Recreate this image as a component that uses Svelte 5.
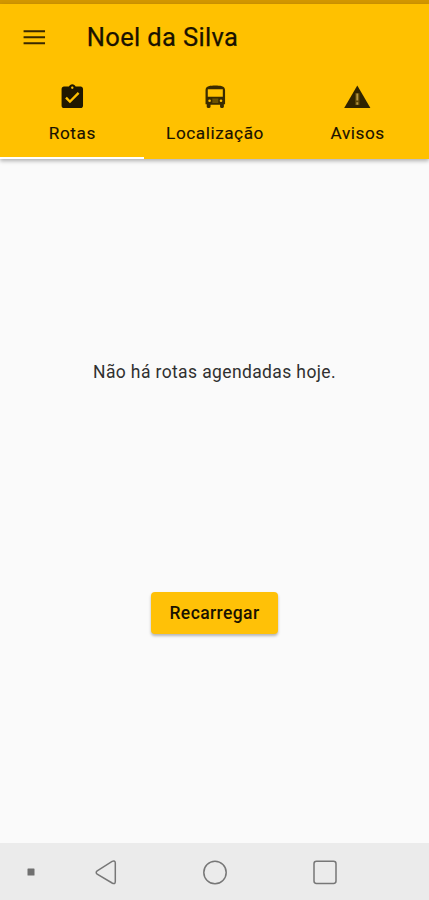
<script>
  const icons = {
    menu: 'M3 17.8h18v-1.7H3v1.7zm0-5h18v-1.7H3v1.7zm0-6.7v1.7h18V6.1H3z',
    tasks: 'M19 3h-4.18C14.4 1.84 13.3 1 12 1s-2.4.84-2.82 2H5c-1.1 0-2 .9-2 2v14c0 1.1.9 2 2 2h14c1.1 0 2-.9 2-2V5c0-1.1-.9-2-2-2zm-7 0c.55 0 1 .45 1 1s-.45 1-1 1-1-.45-1-1 .45-1 1-1zm-2 14l-4-4 1.41-1.41L10 14.17l6.59-6.59L18 9l-8 8z',
    warning: 'M1 21h22L12 2 1 21z'
  };
  const tabs = [
    { id: 'tasks', label: 'Rotas' },
    { id: 'bus', label: 'Localização' },
    { id: 'warning', label: 'Avisos' }
  ];
  let active = $state('tasks');
</script>

<div class="screen">
  <div class="status"></div>
  <header>
    <div class="toolbar">
      <button class="menu" aria-label="Menu">
        <svg class="icon" viewBox="0 0 24 24"><path d={icons.menu} /></svg>
      </button>
      <h1>Noel da Silva</h1>
    </div>
    <nav class="tabs">
      {#each tabs as tab}
        <button class="tab" class:active={active === tab.id} onclick={() => (active = tab.id)}>
          {#if tab.id === 'bus'}
            <svg class="icon bus" viewBox="0 0 24 24">
              <path fill-rule="evenodd" d="M12 2.2C8 2.2 3.8 2.6 3.8 6v11.9H4.8V20c0 .55.45 1 1 1h1.2c.55 0 1-.45 1-1v-1.8h8V20c0 .55.45 1 1 1h1.2c.55 0 1-.45 1-1v-2.1h1V6c0-3.4-4.2-3.8-8.2-3.8zM5.7 5.2h12.6v6.4H5.7zM7.2 13.8a1.1 1.1 0 1 1 0 2.2 1.1 1.1 0 0 1 0-2.2zM16.8 13.8a1.1 1.1 0 1 1 0 2.2 1.1 1.1 0 0 1 0-2.2z" />
              <path class="grille" d="M9.5 13h5v3.8h-5z" />
            </svg>
          {:else}
            <svg class="icon {tab.id}" viewBox="0 0 24 24">
              <path d={icons[tab.id]} />
              {#if tab.id === 'warning'}
                <path class="glow" d="M10.1 8.5h3.8v10h-3.8z" />
                <path class="mark" d="M11.2 8.8h1.6v5.9h-1.6zM11.2 16.2h1.6v2h-1.6z" />
              {/if}
            </svg>
          {/if}
          <span>{tab.label}</span>
        </button>
      {/each}
    </nav>
  </header>

  <main>
    <p>Não há rotas agendadas hoje.</p>
    <button class="reload">Recarregar</button>
  </main>

  <footer>
    <svg viewBox="0 0 429 57">
      <rect class="dot" x="27.5" y="25.5" width="7" height="7" rx="0.6" />
      <path d="M97.2 27.9 112.1 18.4Q115.3 17.3 115.3 20V38.5Q115.3 41.7 112.1 40L97.2 31.1Q95.2 29.5 97.2 27.9z" />
      <circle cx="215" cy="29.5" r="11.2" />
      <rect x="314" y="18.3" width="22" height="22.2" rx="2.4" />
    </svg>
  </footer>
</div>

<style>
  :global(body) { margin: 0; }
  .screen {
    display: flex;
    flex-direction: column;
    width: 429px;
    height: 900px;
    overflow: hidden;
    background: #fafafa;
    color: #1a1200;
    font-family: Roboto, 'Liberation Sans', sans-serif;
  }
  button {
    padding: 0;
    border: 0;
    background: none;
    color: inherit;
    font: inherit;
    cursor: pointer;
  }
  .status { flex: none; height: 4px; background: #d29600; }
  header {
    flex: none;
    display: flex;
    flex-direction: column;
    height: 155px;
    background: #ffc100;
    box-shadow: 0 2px 4px rgba(0, 0, 0, 0.3);
  }
  .toolbar { display: flex; align-items: center; height: 67px; padding-left: 19.7px; }
  .menu { display: flex; }
  .icon { display: block; width: 28.6px; height: 28.6px; fill: #2a2000; }
  .menu .icon { fill: #3a2900; }
  .tasks { fill: #201800; }
  .warning { fill: #302300; }
  .bus { fill: #3a2b00; }
  .grille { fill: #6b5100; }
  .glow { fill: #5a4407; }
  .mark { fill: #b79643; }
  h1 {
    margin: -2px 0 0 38.5px;
    font-size: 25.5px;
    line-height: 30px;
    font-weight: 400;
    letter-spacing: 0.35px;
    -webkit-text-stroke: 0.25px currentColor;
  }
  .tabs { display: flex; flex: 1; padding-left: 1px; }
  .tab {
    flex: 1;
    display: flex;
    flex-direction: column;
    align-items: center;
    padding-top: 12px;
    border-bottom: 2.5px solid transparent;
    font-size: 17.2px;
    line-height: 20px;
    letter-spacing: 0.55px;
  }
  .tab:first-child { margin-left: -1px; padding-left: 1px; }
  .tab span { margin-top: 11.4px; -webkit-text-stroke: 0.15px currentColor; }
  .tab.active { border-bottom-color: #fff; }
  main { flex: 1; display: flex; flex-direction: column; align-items: center; }
  p {
    margin: 203px 0 0;
    font-size: 17.5px;
    line-height: 20px;
    letter-spacing: 0.38px;
    color: #303030;
  }
  .reload {
    width: 127px;
    height: 42.5px;
    margin-top: 209.5px;
    padding-top: 1px;
    border-radius: 4px;
    background: #ffc107;
    box-shadow: 0 2px 3px rgba(0, 0, 0, 0.28);
    font-size: 17.5px;
    font-weight: 500;
    letter-spacing: 0.4px;
  }
  footer { flex: none; height: 57px; background: #ebebeb; }
  footer svg { display: block; width: 429px; height: 57px; fill: none; stroke: #777; stroke-width: 1.5; }
  footer .dot { fill: #707070; stroke: none; }
</style>
